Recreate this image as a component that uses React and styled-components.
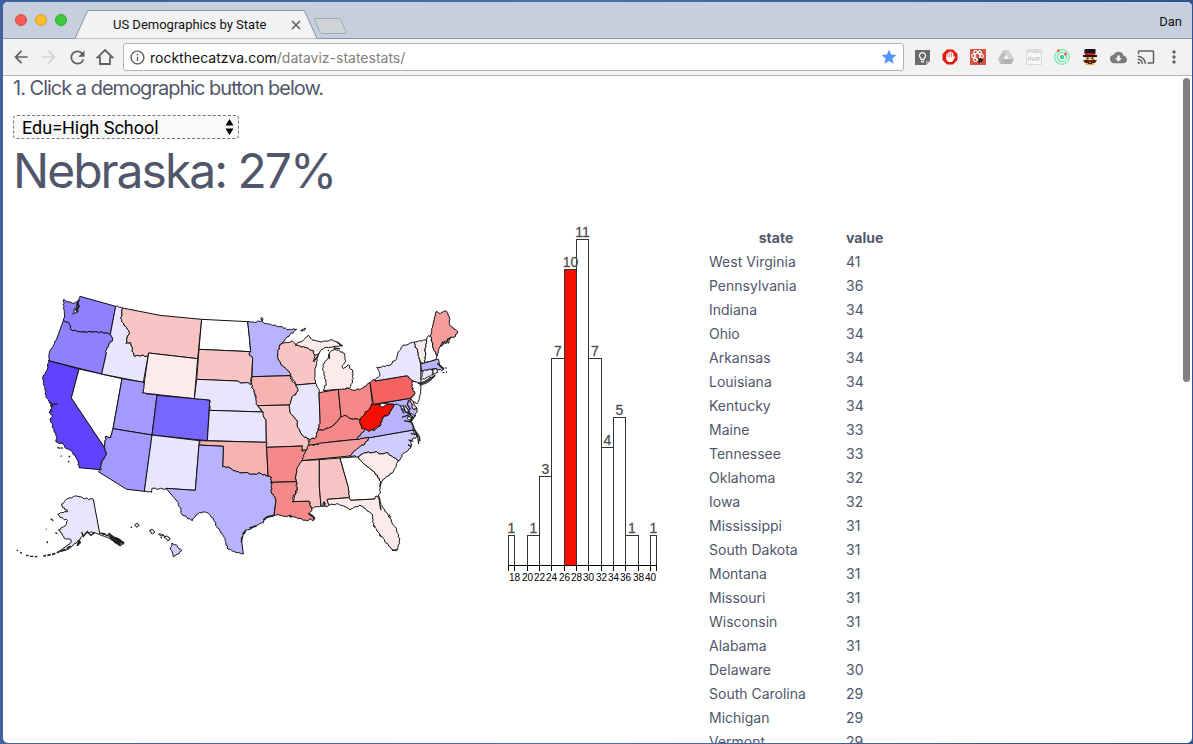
import React from 'react';
import styled, { createGlobalStyle } from 'styled-components';
import {
  MdArrowBack, MdArrowForward, MdRefresh, MdInfoOutline, MdStar,
  MdCloudDownload, MdCast, MdMoreVert,
} from 'react-icons/md';

const GlobalStyle = createGlobalStyle`
  * { box-sizing: border-box; }
  body {
    margin: 0;
    background: #41629f;
    font-family: Inter, "Liberation Sans", sans-serif;
    color: #51576b;
  }
  button { border: 0; padding: 0; background: none; font: inherit; color: inherit; }
`;

/* ---------- window chrome ---------- */

const Desktop = styled.div`
  height: 100vh;
  padding: 2px 1px 1px 3px;
  background: linear-gradient(90deg, #41629f, #4a6cab 50%, #33518f);
`;

const Window = styled.div`
  height: 100%;
  display: flex;
  flex-direction: column;
  overflow: hidden;
  background: #fff;
  border-radius: 5px;
`;

const TabStrip = styled.header`
  height: 37px;
  flex: none;
  display: flex;
  align-items: flex-end;
  padding: 0 10px 0 12px;
  background: #c5cfde;
  border-bottom: 1px solid #8b93a3;
`;

const Lights = styled.div`
  display: flex;
  gap: 8px;
  align-self: center;
  width: 60px;
`;

const Light = styled.button`
  width: 12px;
  height: 12px;
  border-radius: 50%;
  background: ${(p) => p.$color};
  border: 1px solid ${(p) => p.$edge};
`;

const Tab = styled.div`
  position: relative;
  width: 242px;
  height: 29px;
  margin-bottom: -1px;
  display: flex;
  align-items: center;
  padding: 0 16px 0 38px;
  color: #111;
  font-family: Roboto, sans-serif;
  font-size: 13px;
`;

const TabShape = styled.svg`
  position: absolute;
  inset: 0;
  width: 100%;
  height: 100%;
`;

const TabTitle = styled.span`
  position: relative;
  flex: 1;
`;

const TabClose = styled.button`
  position: relative;
  display: flex;
`;

const NewTab = styled.button`
  align-self: center;
  display: flex;
  margin-left: -4px;
  margin-top: 12px;
`;

const Profile = styled.button`
  margin-left: auto;
  align-self: center;
  padding-top: 2px;
  font-family: Roboto, sans-serif;
  font-size: 13px;
  color: #111;
`;

const Toolbar = styled.nav`
  height: 37px;
  flex: none;
  display: flex;
  align-items: center;
  gap: 10px;
  padding: 0 10px;
  background: #f2f2f2;
  border-bottom: 1px solid #b4b4b4;
`;

const IconGroup = styled.div`
  display: flex;
  gap: 12px;
`;

const IconButton = styled.button`
  width: 16px;
  height: 16px;
  display: flex;
  align-items: center;
  justify-content: center;
  color: ${(p) => p.$color || '#5f6163'};
  svg { flex: none; }
`;

const AddressBar = styled.div`
  flex: 1;
  height: 28px;
  display: flex;
  align-items: center;
  gap: 5px;
  padding: 0 6px 0 5px;
  background: #fff;
  border: 1px solid #b3b3b3;
  border-radius: 3px;
`;

const Address = styled.a`
  flex: 1;
  font-size: 14px;
  color: #808080;
  text-decoration: none;
`;

const Host = styled.span`
  color: #111;
`;

/* ---------- page ---------- */

const Page = styled.main`
  flex: 1;
  min-height: 0;
  display: flex;
  overflow: hidden;
`;

const Content = styled.div`
  flex: 1;
  padding-left: 10px;
`;

const ScrollTrack = styled.div`
  width: 11px;
  padding: 2px 2px 0 2px;
`;

const ScrollThumb = styled.div`
  height: 304px;
  border-radius: 4px;
  background: #808080;
`;

const Step = styled.label`
  display: block;
  height: 39px;
  font-size: 20px;
  line-height: 24px;
  letter-spacing: -1px;
`;

const SelectBox = styled.div`
  display: flex;
  align-items: center;
  width: 226px;
  height: 24px;
  padding-right: 4px;
  background: #f8f8f8;
  border: 1px dashed #777;
  border-radius: 4px;
`;

const Select = styled.select`
  flex: 1;
  appearance: none;
  padding: 0 0 0 8px;
  border: 0;
  outline: 0;
  background: transparent;
  color: #000;
  font-family: Roboto, sans-serif;
  font-size: 18px;
`;

const Title = styled.h1`
  margin: 0;
  height: 75px;
  font-size: 48px;
  line-height: 64px;
  font-weight: 400;
  letter-spacing: -2px;
`;

const Panels = styled.section`
  display: flex;
  align-items: flex-start;
`;

const MapSvg = styled.svg`
  flex: none;
  width: 480px;
  height: 372px;
`;

const ChartSvg = styled.svg`
  flex: none;
  width: 170px;
  height: 372px;
  margin: 0 36px 0 10px;
`;

const Table = styled.table`
  margin-top: 12px;
  border-collapse: collapse;
  font-size: 14px;
  line-height: 24px;
`;

const Cell = styled.td`
  padding: 0 0 0 ${(p) => (p.$value ? 3 : 0)}px;
  width: ${(p) => (p.$value ? 'auto' : '134px')};
`;

const HeadCell = styled(Cell)`
  font-weight: 700;
  text-align: center;
`;

/* ---------- map ---------- */

const hash = (a, b) => {
  const s = Math.sin(a * 12.9898 + b * 78.233) * 43758.5453;
  return (s - Math.floor(s)) * 2 - 1;
};

/* Splits the short runs of a border into a ragged line; long runs are
   surveyed borders and stay straight. Neighbours share the same result. */
const ragged = (a, b) => {
  const len = Math.hypot(b[0] - a[0], b[1] - a[1]);
  if (len > 44 || len < 9) return [b];
  const flip = a[0] > b[0] || (a[0] === b[0] && a[1] > b[1]);
  const [p, q] = flip ? [b, a] : [a, b];
  const n = Math.round(len / 5);
  const pts = [];
  for (let i = 1; i < n; i++) {
    const t = i / n;
    const k = hash(p[0] + q[0] + i * 3, p[1] + q[1] + i) * 2.4;
    pts.push([
      p[0] + (q[0] - p[0]) * t - ((q[1] - p[1]) / len) * k,
      p[1] + (q[1] - p[1]) * t + ((q[0] - p[0]) / len) * k,
    ]);
  }
  if (flip) pts.reverse();
  return [...pts, b];
};

const outline = (text) => {
  const pts = text.trim().split(/\s+/).map((s) => s.split(',').map(Number));
  const out = [pts[0]];
  pts.forEach((p, i) => out.push(...ragged(p, pts[(i + 1) % pts.length])));
  return `M${out.map((p) => `${p[0].toFixed(1)},${p[1].toFixed(1)}`).join('L')}Z`;
};

const STATES = [
  ['WA', '#8f80ff', '192,898 207,906 222,910 232,906 230,918 222,932 218,942 230,938 236,922 234,906 240,889 347,919 331,1003 292,996 252,996 214,990 207,969 190,962 194,945 190,925'],
  ['OR', '#8f80ff', '190,962 207,969 214,990 252,996 292,996 331,1003 338,1018 316,1054 318,1064 305,1122 146,1082 150,1052 170,1017'],
  ['CA', '#5f43ff', '146,1082 237,1107 214,1194 313,1342 319,1365 306,1382 300,1409 237,1403 234,1380 216,1354 198,1345 190,1332 168,1326 170,1310 160,1285 150,1258 158,1246 148,1236 156,1226 150,1210 138,1192 134,1160 129,1130 142,1108'],
  ['NV', '#ffffff', '237,1107 366,1136 339,1286 333,1312 318,1308 313,1342 214,1194'],
  ['ID', '#e8e5ff', '347,919 368,924 362,955 372,976 388,997 378,1030 391,1027 404,1069 425,1066 444,1069 430,1147 305,1122 318,1064 316,1054 338,1018 331,1003'],
  ['MT', '#f8c4c4', '368,924 480,946 605,958 593,1076 446,1059 444,1069 425,1066 404,1069 391,1027 378,1030 388,997 372,976 362,955'],
  ['WY', '#fdeaea', '446,1059 593,1076 583,1196 428,1179'],
  ['UT', '#a399ff', '366,1136 432,1147 428,1179 471,1186 456,1305 339,1286'],
  ['CO', '#7766ff', '471,1186 583,1196 629,1200 622,1322 456,1305'],
  ['AZ', '#a399ff', '339,1286 456,1305 433,1474 380,1468 295,1415 304,1409 306,1382 319,1365 313,1342 318,1308 333,1312'],
  ['NM', '#e8e5ff', '456,1305 598,1322 586,1471 498,1465 497,1468 456,1465 455,1477 433,1474'],
  ['ND', '#ffffff', '605,958 743,965 748,1010 752,1055 597,1048'],
  ['SD', '#f8c4c4', '597,1048 752,1055 748,1065 758,1075 755,1130 754,1153 735,1148 722,1150 712,1143 590,1138'],
  ['NE', '#e8e5ff', '590,1138 712,1143 722,1150 735,1148 754,1153 764,1180 772,1210 776,1222 790,1236 628,1231 629,1200 583,1196'],
  ['KS', '#e8e5ff', '628,1231 790,1236 790,1250 798,1258 799,1327 622,1322'],
  ['OK', '#f7b2b2', '598,1322 799,1327 800,1342 804,1428 780,1420 755,1423 735,1418 710,1416 690,1404 668,1400 670,1339 597,1335'],
  ['TX', '#b9b3ff', '597,1335 670,1339 668,1400 690,1404 710,1416 735,1418 755,1423 780,1420 804,1428 814,1432 814,1475 828,1500 822,1546 800,1550 790,1568 760,1580 735,1595 724,1615 730,1662 710,1658 685,1648 672,1612 650,1580 640,1555 620,1538 598,1538 588,1545 577,1562 545,1542 535,1508 498,1465 586,1471'],
  ['MN', '#b9b3ff', '743,965 783,965 785,952 790,968 815,975 840,980 860,988 890,988 862,1010 848,1030 838,1035 833,1060 835,1080 850,1100 868,1115 872,1127 756,1130 758,1075 748,1065 752,1055 748,1010'],
  ['WI', '#f8c4c4', '848,1030 862,1028 876,1022 890,1035 925,1045 940,1052 944,1066 940,1085 954,1068 948,1100 945,1130 947,1150 888,1155 872,1127 868,1115 850,1100 835,1080 833,1060 838,1038'],
  ['IA', '#f7b2b2', '756,1130 872,1127 876,1145 888,1155 895,1172 875,1195 868,1215 772,1217 764,1180 754,1153'],
  ['MO', '#f8c4c4', '772,1217 868,1215 870,1235 892,1262 893,1282 906,1305 922,1315 928,1335 920,1352 905,1352 908,1338 800,1342 799,1327 798,1258 790,1248 790,1236'],
  ['AR', '#f58888', '800,1342 908,1338 905,1352 918,1352 910,1380 890,1408 887,1430 889,1445 815,1447 814,1432 804,1428'],
  ['LA', '#f58888', '815,1447 889,1445 892,1467 880,1490 878,1505 927,1503 932,1520 936,1532 926,1542 944,1552 940,1562 930,1556 920,1562 900,1555 880,1550 868,1546 860,1550 840,1546 822,1546 828,1500 814,1475'],
  ['IL', '#e8e5ff', '888,1155 947,1150 955,1165 957,1178 960,1255 958,1280 950,1300 948,1312 930,1320 922,1315 906,1305 893,1282 892,1262 870,1235 868,1215 875,1195 895,1172'],
  ['IN', '#f58888', '957,1178 1015,1168 1023,1250 1005,1270 990,1282 975,1288 955,1290 960,1255'],
  ['OH', '#f58888', '1015,1168 1042,1164 1062,1171 1085,1165 1110,1148 1117,1208 1108,1228 1095,1240 1080,1262 1065,1256 1050,1256 1032,1246 1023,1250'],
  ['KY', '#f58888', '930,1320 948,1312 950,1300 955,1290 975,1288 990,1282 1005,1270 1023,1250 1032,1246 1050,1256 1065,1256 1080,1262 1082,1275 1095,1288 1070,1318 1000,1325 925,1336'],
  ['TN', '#f59c9c', '925,1336 955,1334 955,1330 1070,1318 1108,1313 1095,1332 1070,1348 1048,1368 905,1382 918,1352'],
  ['MS', '#f8c4c4', '905,1382 958,1379 958,1460 963,1518 935,1524 927,1503 878,1505 892,1467 887,1430 890,1408'],
  ['AL', '#f8c4c4', '958,1379 1020,1374 1043,1455 1047,1493 982,1498 988,1515 978,1520 972,1505 970,1520 963,1518 958,1460'],
  ['GA', '#ffffff', '1020,1374 1075,1370 1090,1390 1125,1418 1142,1445 1140,1480 1135,1490 1125,1497 1052,1501 1047,1493 1043,1455'],
  ['FL', '#fdeaea', '982,1498 1047,1493 1052,1501 1125,1497 1128,1488 1135,1490 1150,1525 1170,1555 1190,1590 1199,1620 1192,1650 1178,1650 1165,1635 1140,1605 1120,1575 1118,1545 1095,1525 1080,1515 1065,1520 1050,1530 1035,1520 1015,1512 988,1515'],
  ['NC', '#d1ccff', '1048,1368 1070,1348 1095,1332 1108,1313 1240,1290 1250,1310 1232,1322 1236,1335 1225,1350 1210,1360 1200,1380 1195,1382 1160,1358 1138,1362 1130,1355 1095,1358 1075,1370'],
  ['SC', '#fdeaea', '1075,1370 1095,1358 1130,1355 1138,1362 1160,1358 1195,1382 1180,1415 1155,1435 1142,1445 1125,1418 1090,1390'],
  ['MD', '#b9b3ff', '1140,1210 1230,1195 1240,1228 1252,1226 1246,1248 1228,1240 1218,1218 1195,1218 1180,1213'],
  ['VA', '#b9b3ff', '1070,1318 1095,1288 1120,1292 1140,1278 1150,1252 1165,1245 1180,1215 1196,1214 1215,1235 1232,1244 1222,1256 1236,1268 1240,1290 1108,1313'],
  ['WV', '#f50f00', '1117,1212 1140,1212 1145,1222 1165,1212 1182,1214 1165,1245 1150,1248 1138,1278 1110,1293 1085,1285 1080,1262 1095,1240 1108,1228'],
  ['DE', '#f9cccc', '1230,1198 1238,1200 1250,1225 1240,1228'],
  ['PA', '#f46262', '1110,1148 1122,1138 1125,1143 1222,1127 1240,1145 1235,1160 1245,1180 1230,1195 1120,1213'],
  ['NJ', '#ffffff', '1240,1143 1260,1150 1262,1175 1258,1198 1250,1212 1232,1195 1245,1180 1235,1160'],
  ['NY', '#e8e5ff', '1125,1143 1140,1125 1130,1102 1170,1095 1190,1075 1195,1055 1210,1035 1242,1027 1255,1060 1262,1090 1263,1148 1240,1143 1222,1127'],
  ['LI', '#e8e5ff', '1260,1152 1296,1132 1306,1126 1290,1142 1262,1158'],
  ['VT', '#fdeaea', '1242,1027 1280,1018 1275,1050 1275,1088 1261,1090 1255,1060'],
  ['NH', '#ffffff', '1280,1018 1285,1007 1292,1010 1300,1045 1310,1070 1305,1080 1275,1088 1275,1050'],
  ['ME', '#f59c9c', '1292,1010 1298,978 1308,935 1322,940 1335,932 1343,940 1353,980 1373,996 1362,1012 1350,1012 1345,1030 1335,1022 1328,1036 1320,1040 1312,1068 1300,1045'],
  ['MA', '#b9b3ff', '1262,1092 1305,1080 1315,1078 1318,1095 1332,1104 1325,1112 1310,1105 1265,1113'],
  ['CT', '#e8e5ff', '1265,1113 1299,1107 1300,1125 1264,1140'],
  ['RI', '#ffffff', '1299,1107 1308,1105 1312,1118 1300,1122'],
  ['MI', '#fdeaea', '970,1172 978,1150 972,1115 968,1095 985,1075 988,1060 1000,1050 1015,1050 1035,1062 1036,1085 1026,1100 1030,1106 1045,1095 1058,1115 1060,1135 1048,1165 1015,1168'],
  ['MI2', '#fdeaea', '885,1035 910,1020 925,1005 935,1018 960,1025 990,1020 1010,1025 1025,1038 1000,1040 980,1042 966,1048 952,1064 944,1066 940,1052 925,1045 890,1035'],
  ['IR', '#fdeaea', '902,993 916,984 910,992'],
  ['AK', '#e8e5ff', '185,1512 200,1497 224,1488 250,1495 280,1498 299,1600 325,1606 348,1624 372,1630 362,1637 325,1614 299,1604 280,1598 262,1598 245,1610 228,1630 205,1648 175,1656 213,1628 212,1618 192,1614 186,1600 175,1590 195,1578 203,1562 180,1552 173,1543 190,1538 203,1535 186,1518'],
  ['HI', '#d1ccff', '515,1630 528,1634 545,1652 520,1670 511,1648'],
  ['HI2', '#e8e5ff', '404,1575 412,1570 418,1576 410,1582'],
  ['HI3', '#e8e5ff', '448,1592 456,1588 464,1596 458,1602'],
  ['HI4', '#e8e5ff', '476,1602 490,1604 494,1610 480,1607'],
  ['HI5', '#e8e5ff', '492,1612 500,1608 511,1616 502,1622'],
];

/* Thick strokes stand for coasts whose islands merge at this scale. */
const COASTS = [
  [6, 'M236,900 L232,912 L236,920 L228,930 L234,936'],
  [4, 'M150,1208 L158,1212 L174,1213 M150,1216 L160,1218 M150,1228 L156,1236'],
  [4, 'M172,1342 l8,3 M182,1344 l6,0 M182,1368 l3,1 M206,1368 l4,4 M204,1384 l4,3'],
  [7, 'M325,1600 L340,1612 L356,1618 L372,1631 M330,1610 L346,1626 L362,1635 M345,1613 L350,1622 L366,1628'],
  [4, 'M299,1600 L312,1600 L322,1608 M245,1596 L250,1610 L262,1594 L272,1606 L284,1598'],
  [6, 'M238,1620 L232,1638 M242,1625 L236,1632'],
  [5, 'M130,1668 l8,-2 M142,1666 l10,-2 M156,1663 l10,-3 M170,1658 l10,-4 M184,1654 l12,-6 M200,1646 l12,-8'],
  [4, 'M50,1650 l4,2 M60,1658 l6,1 M78,1666 l8,1 M90,1669 l10,0 M104,1670 l8,0 M152,1556 l8,6 M138,1587 l2,1 M141,1624 l2,6 M166,1598 l6,3'],
  [4, 'M392,1583 l4,-2 M482,1612 l4,3'],
  [5, 'M822,1546 L800,1552 L790,1560 M770,1578 L748,1584 M738,1590 L728,1602 M727,1610 L724,1626'],
  [5, 'M926,1540 L938,1548 L944,1558 M868,1546 L874,1552 M972,1506 L974,1520'],
  [4, 'M1137,1490 L1140,1516 L1143,1530 M1166,1544 L1173,1552 M1139,1460 L1144,1446 M1120,1575 L1126,1582 M1138,1604 L1144,1610 M1176,1650 L1190,1652'],
  [4, 'M1210,1218 L1216,1234 L1232,1242 M1204,1226 L1212,1240 M1226,1200 L1222,1214 L1230,1226 L1224,1238 L1238,1250 L1230,1262 M1206,1252 L1222,1246 L1236,1254 M1212,1262 L1232,1266 L1246,1246 M1236,1268 L1244,1290 L1258,1310 L1260,1324'],
  [4, 'M1232,1300 L1246,1304 M1226,1320 L1240,1324 M1244,1290 L1254,1314 L1256,1332 M1224,1334 L1234,1340'],
  [4, 'M1262,1153 L1284,1142 L1304,1128 M1312,1090 L1328,1106 M1336,1104 l4,0 M1328,1118 l5,0 M1338,1116 l3,0'],
  [4, 'M1322,1038 L1328,1026 L1338,1030 L1344,1016 L1352,1016'],
  [4, 'M940,1085 L952,1072 L956,1060 M984,1050 l3,3 M988,1076 l0,-14 M1000,1044 L1020,1046 M1010,1026 L1028,1038'],
];

const UsMap = () => (
  <MapSvg viewBox="39 642 1440 1116" role="img" aria-label="Map of the United States">
    {STATES.map(([id, fill, pts]) => (
      <path key={id} d={outline(pts)} fill={fill} stroke="#111" strokeWidth="3" strokeLinejoin="round" />
    ))}
    {COASTS.map(([w, d]) => (
      <path key={d} d={d} fill="none" stroke="#222" strokeWidth={w} strokeLinejoin="round" />
    ))}
  </MapSvg>
);

/* ---------- histogram ---------- */

const BARS = [
  [508.5, 514.5, 1], [527.5, 539.5, 1], [539.5, 551.5, 3], [551.5, 564.5, 7],
  [564.5, 576.5, 10], [576.5, 588.5, 11], [588.5, 601.5, 7], [601.5, 613.5, 4],
  [613.5, 625.5, 5], [625.5, 638.5, 1], [650.5, 656.5, 1],
];
const TICKS = [514.5, 527.5, 539.5, 551.5, 564.5, 576.5, 588.5, 601.5, 613.5, 625.5, 638.5, 650.5];
const barTop = (n) => Math.round(565 - n * 29.6) + 0.5;

const Histogram = () => (
  <ChartSvg viewBox="503 214 170 372" role="img" aria-label="Histogram">
    {BARS.map(([x0, x1, n]) => (
      <rect key={x0} x={x0} y={barTop(n)} width={x1 - x0} height={565.5 - barTop(n)} fill={n === 10 ? '#f50f00' : '#fff'} stroke="#333" />
    ))}
    {BARS.map(([x0, x1, n]) => (
      <text key={x0} x={(x0 + x1) / 2} y={barTop(n) - 3} textAnchor="middle" fontFamily="Liberation Sans" fontSize="14" fill="#444" stroke="#666" strokeWidth="0.3">{n}</text>
    ))}
    <path d="M508.5,571V565.5H656.5V571" fill="none" stroke="#000" />
    {TICKS.map((x, i) => (
      <g key={x}>
        <path d={`M${x},565V571`} stroke="#000" />
        <text x={x} y="581" textAnchor="middle" fontFamily="Liberation Sans" fontSize="10" fill="#000">{18 + i * 2}</text>
      </g>
    ))}
  </ChartSvg>
);

/* ---------- toolbar icons ---------- */

const HomeIcon = () => (
  <svg width="18" height="18" viewBox="0 0 18 18" fill="none" stroke="currentColor" strokeWidth="1.8">
    <path d="M1.5 9.3 9 2l7.5 7.3H14V16H4V9.3Z" />
  </svg>
);

const NoteIcon = () => (
  <svg width="15" height="15" viewBox="0 0 15 15">
    <path d="M0 0h15v11l-4 4H0z" fill="#6b6b6b" />
    <path d="M11 15v-4h4z" fill="#a5a5a5" />
    <path d="M6 9.5V8.200A3 3 0 1 1 9 8.200V9.500Z" fill="none" stroke="#fff" strokeWidth="1.200" />
    <path d="M6 11.500h3" stroke="#fff" strokeWidth="1.300" />
  </svg>
);

const BlockIcon = () => (
  <svg width="16" height="16" viewBox="0 0 16 16">
    <path d="M5 .5h6L15.500 5v6L11 15.500H5L.5 11V5z" fill="#e2190f" />
    <path d="M5 5v4M6.900 3.500v6M8.800 3v6M10.700 4.200v6" stroke="#fff" strokeWidth="1.400" strokeLinecap="round" />
    <path d="M4.300 8h7.100l1.300-1 .5.800-2.500 4.400-1 .9H6.500L4.300 11z" fill="#fff" />
  </svg>
);

const ReactToolIcon = () => (
  <svg width="16" height="16" viewBox="0 0 16 16">
    <path d="M0 0h16v16H0z" fill="#d65343" />
    <g fill="none" stroke="#fff" strokeWidth="1.100">
      <ellipse cx="7.500" cy="7" rx="6" ry="2.500" />
      <ellipse cx="7.500" cy="7" rx="6" ry="2.500" transform="rotate(60 7.5 7)" />
      <ellipse cx="7.500" cy="7" rx="6" ry="2.500" transform="rotate(120 7.5 7)" />
    </g>
    <path d="M8 9l4 4M11 9l-2 5M8 12.500l5-2" stroke="#2b1513" strokeWidth="1.500" />
  </svg>
);

const DriveIcon = () => (
  <svg width="16" height="14" viewBox="0 0 16 14">
    <path d="M5.500 0h5L16 9h-5z" fill="#d2d2d2" />
    <path d="M5.500 0 8 4.500 2.500 14 0 9z" fill="#bfbfbf" />
    <path d="M5 9h11l-2.500 5h-11z" fill="#b3b3b3" />
  </svg>
);

const PhpIcon = () => (
  <svg width="16" height="16" viewBox="0 0 16 16">
    <path d="M.5.5h15v15H.5z" fill="#f6f6f6" stroke="#dadada" />
    <path d="M1 1h14v3H1z" fill="#e2e2e2" />
    <path d="M2 2.500h3M7 2.500h6" stroke="#c8c8c8" strokeDasharray="2 1" />
    <text x="8" y="12" textAnchor="middle" fontFamily="Liberation Sans" fontWeight="700" fontSize="6" fill="#c6c6c6">PHP</text>
  </svg>
);

const OrbitIcon = () => (
  <svg width="16" height="16" viewBox="0 0 16 16">
    <circle cx="8" cy="8" r="7.300" fill="none" stroke="#6ee8ae" strokeWidth="1.200" />
    <circle cx="8" cy="8" r="4.600" fill="none" stroke="#6ee8ae" strokeWidth="1.200" />
    <circle cx="8" cy="8" r="2.200" fill="#35dc8c" />
    <circle cx="4.500" cy="1.800" r="1.500" fill="#f2762e" />
    <circle cx="11.500" cy="5" r="1.500" fill="#f25c3a" />
  </svg>
);

const HatIcon = () => (
  <svg width="16" height="16" viewBox="0 0 16 16">
    <path d="M2.500 0h11v5h-11z" fill="#151515" />
    <path d="M3 4h10v2H3z" fill="#d31820" />
    <path d="M1 6h14v2H1z" fill="#151515" />
    <path d="M3 8h10v5H3z" fill="#f4c273" />
    <path d="M5 8.500h1.500V10H5zM9.500 8.500H11V10H9.500z" fill="#151515" />
    <path d="M1 11.500 5 10.500l3 1 3-1 4 1-2 2.500H9l-1-1-1 1H3z" fill="#5d1d10" />
    <path d="M4 14h8v2H4z" fill="#e8a73e" />
    <path d="M6 14.500h4" stroke="#5d1d10" />
  </svg>
);

const ROWS = [
  ['West Virginia', 41], ['Pennsylvania', 36], ['Indiana', 34], ['Ohio', 34],
  ['Arkansas', 34], ['Louisiana', 34], ['Kentucky', 34], ['Maine', 33],
  ['Tennessee', 33], ['Oklahoma', 32], ['Iowa', 32], ['Mississippi', 31],
  ['South Dakota', 31], ['Montana', 31], ['Missouri', 31], ['Wisconsin', 31],
  ['Alabama', 31], ['Delaware', 30], ['South Carolina', 29], ['Michigan', 29],
  ['Vermont', 29],
];

export default function App() {
  return (
    <Desktop>
      <GlobalStyle />
      <Window>
        <TabStrip>
          <Lights>
            <Light $color="#f55d55" $edge="#dc4a42" aria-label="Close window" />
            <Light $color="#f9bd2e" $edge="#dda021" aria-label="Minimize window" />
            <Light $color="#3fca3e" $edge="#2bac2c" aria-label="Zoom window" />
          </Lights>
          <Tab>
            <TabShape viewBox="0 0 242 29" preserveAspectRatio="none">
              <path d="M0,28.500 L12,2 Q13,.5 15,.5 H227 Q229,.5 230,2 L242,28.500" fill="#f2f2f2" stroke="#8b93a3" />
            </TabShape>
            <TabTitle>US Demographics by State</TabTitle>
            <TabClose aria-label="Close tab">
              <svg width="10" height="10" viewBox="0 0 10 10" stroke="#5f6163" strokeWidth="1.600">
                <path d="M1 1l8 8M9 1l-8 8" />
              </svg>
            </TabClose>
          </Tab>
          <NewTab aria-label="New tab">
            <svg width="34" height="17" viewBox="0 0 34 17">
              <path d="M3,.5H25Q27,.5 28,2L33,14Q33.500,15.500 32,15.500H10Q8,15.500 7,14L1.500,2Q1,.5 3,.5Z" fill="#d0d4d9" stroke="#a3a9b3" />
            </svg>
          </NewTab>
          <Profile>Dan</Profile>
        </TabStrip>

        <Toolbar>
          <IconGroup>
            <IconButton aria-label="Back"><MdArrowBack size={20} /></IconButton>
            <IconButton aria-label="Forward" $color="#d2d2d2"><MdArrowForward size={20} /></IconButton>
            <IconButton aria-label="Reload"><MdRefresh size={21} /></IconButton>
            <IconButton aria-label="Home"><HomeIcon /></IconButton>
          </IconGroup>
          <AddressBar>
            <IconButton aria-label="Site information"><MdInfoOutline size={17} /></IconButton>
            <Address href="#"><Host>rockthecatzva.com</Host>/dataviz-statestats/</Address>
            <IconButton aria-label="Bookmark" $color="#5495f7"><MdStar size={18} /></IconButton>
          </AddressBar>
          <IconGroup>
            <IconButton aria-label="Notes"><NoteIcon /></IconButton>
            <IconButton aria-label="Ad blocker"><BlockIcon /></IconButton>
            <IconButton aria-label="React inspector"><ReactToolIcon /></IconButton>
            <IconButton aria-label="Drive"><DriveIcon /></IconButton>
            <IconButton aria-label="PHP console"><PhpIcon /></IconButton>
            <IconButton aria-label="Orbit"><OrbitIcon /></IconButton>
            <IconButton aria-label="Hat"><HatIcon /></IconButton>
            <IconButton aria-label="Downloads" $color="#7b7b7b"><MdCloudDownload size={17} /></IconButton>
            <IconButton aria-label="Cast"><MdCast size={18} /></IconButton>
            <IconButton aria-label="Menu"><MdMoreVert size={20} /></IconButton>
          </IconGroup>
        </Toolbar>

        <Page>
          <Content>
            <Step htmlFor="demographic">1. Click a demographic button below.</Step>
            <SelectBox>
              <Select id="demographic" defaultValue="hs">
                <option value="hs">Edu=High School</option>
              </Select>
              <svg width="9" height="16" viewBox="0 0 9 16">
                <path d="M4.500 0 8.500 6.500h-8zM4.500 16 .5 9.500h8z" fill="#000" />
              </svg>
            </SelectBox>
            <Title>Nebraska: 27%</Title>
            <Panels>
              <UsMap />
              <Histogram />
              <Table>
                <thead>
                  <tr><HeadCell as="th">state</HeadCell><HeadCell as="th" $value>value</HeadCell></tr>
                </thead>
                <tbody>
                  {ROWS.map(([name, value]) => (
                    <tr key={name}><Cell>{name}</Cell><Cell $value>{value}</Cell></tr>
                  ))}
                </tbody>
              </Table>
            </Panels>
          </Content>
          <ScrollTrack><ScrollThumb /></ScrollTrack>
        </Page>
      </Window>
    </Desktop>
  );
}
